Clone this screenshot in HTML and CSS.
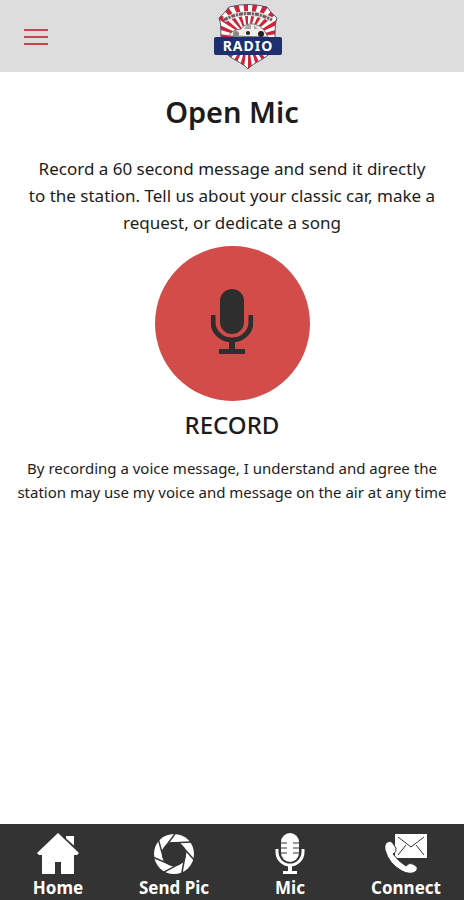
FILE: index.html
```
<!DOCTYPE html>
<html lang="en">
  <head>
    <meta charset="UTF-8" />
    <meta name="viewport" content="width=device-width, initial-scale=1.0" />
    <title>Open Mic</title>
    <link rel="stylesheet" href="styles.css">
  </head>
  <body>

    <header>
      <button class="menu" aria-label="Menu"><span></span><span></span><span></span></button>
      <a class="logo" href="#" aria-label="Radio home">
        <svg width="68" height="66" viewBox="0 0 68 66">
          <defs>
            <path id="outline" d="M5 14 Q11 9 15 3 Q34 -2 53 3 Q57 9 63 14 C59 24 64 34 57 48 C52 55 40 58 34 65 C28 58 16 55 11 48 C4 34 9 24 5 14Z"/>
            <clipPath id="shield"><use href="#outline"/></clipPath>
          </defs>
          <g clip-path="url(#shield)">
            <rect width="68" height="66" fill="#fff"/>
            <circle cx="34" cy="34" r="20" fill="none" stroke="#cf2436" stroke-width="40" pathLength="44" stroke-dasharray="1 1"/>
          </g>
          <use href="#outline" fill="none" stroke="#56546c" stroke-width="1"/>
          <path d="M10 16 Q34 3 58 16" fill="none" stroke="#e8dcdc" stroke-width="5"/>
          <path d="M10 16 Q34 3 58 16" fill="none" stroke="#6b5b60" stroke-width="3" stroke-dasharray="4 1 2 1"/>
          <path d="M15 32 Q17 26 27 25 Q31 19 40 20 Q46 21 50 26 L54 33Z" fill="#efecea" stroke="#777" stroke-width="1"/>
          <path d="M30 25 L33 21 H37 V25Z M40 25 V21 L44 25Z" fill="#aaa"/>
          <circle cx="22" cy="30" r="3" fill="#888"/><circle cx="34" cy="29" r="2" fill="#222"/><circle cx="47" cy="30" r="3" fill="#222"/>
          <rect x="0" y="33" width="68" height="18" rx="2" fill="#1d2f6f"/>
          <text x="34" y="47" text-anchor="middle">RADIO</text>
        </svg>
      </a>
    </header>

    <main>
      <h1>Open Mic</h1>
      <p class="intro">Record a 60 second message and send it directly<br>to the station. Tell us about your classic car, make a<br>request, or dedicate a song</p>
      <button class="record">
        <span class="disc">
          <svg width="42" height="66" viewBox="0 0 42 66">
            <rect x="9" y="0" width="24" height="45" rx="12" fill="#2e2e2e"/>
            <path d="M2 26 V33 A19 18 0 0 0 40 33 V26" fill="none" stroke="#2e2e2e" stroke-width="5"/>
            <path d="M18 51 H24 V60 H34 V65 H8 V60 H18Z" fill="#2e2e2e"/>
          </svg>
        </span>
        RECORD
      </button>
      <p class="terms">By recording a voice message, I understand and agree the<br>station may use my voice and message on the air at any time</p>
    </main>

    <nav>
      <a href="#">
        <svg width="42" height="42" viewBox="0 0 42 42">
          <path d="M21 0 L42 20 L40 22 H37 V41 H24 V29 H18 V41 H5 V22 H2 L0 20Z M29 3 H37 V13 L29 6Z"/>
          <path d="M27 4 L39 15" stroke="#333" stroke-width="1"/>
        </svg>
        Home
      </a>
      <a href="#">
        <svg width="42" height="42" viewBox="-21 -21 42 42">
          <defs><path id="slit" d="M-5 -11 L18 -12" stroke="#333" stroke-width="1.500"/></defs>
          <circle r="20"/>
          <circle r="12" fill="#333"/>
          <use href="#slit"/>
          <use href="#slit" transform="rotate(51)"/>
          <use href="#slit" transform="rotate(103)"/>
          <use href="#slit" transform="rotate(154)"/>
          <use href="#slit" transform="rotate(206)"/>
          <use href="#slit" transform="rotate(257)"/>
          <use href="#slit" transform="rotate(309)"/>
        </svg>
        Send Pic
      </a>
      <a href="#">
        <svg width="42" height="42" viewBox="0 0 42 42">
          <rect x="12" y="0" width="18" height="29" rx="9"/>
          <path d="M12 10 H18 M24 10 H30 M12 15 H18 M24 15 H30 M12 20 H18 M24 20 H30" stroke="#333" stroke-width="1"/>
          <path d="M8 16 V19 A13 13 0 0 0 34 19 V16" fill="none" stroke="#fff" stroke-width="3"/>
          <path d="M19 32 H23 V38 H28 V41 H14 V38 H19Z"/>
        </svg>
        Mic
      </a>
      <a href="#">
        <svg width="42" height="42" viewBox="0 0 42 42">
          <path d="M10 1 H42 V25 H10Z"/>
          <path d="M13 4 L26 14 L39 4 M13 22 L21 12 M39 22 L31 12" fill="none" stroke="#333" stroke-width="1"/>
          <path d="M1 10 Q4 7 7 9 L11 15 Q12 19 8 21 Q13 28 21 33 Q24 29 28 31 L31 33 Q34 36 30 39 Q25 42 17 38 Q4 31 0 17 Q-1 13 1 10Z" stroke="#333" stroke-width="1"/>
        </svg>
        Connect
      </a>
    </nav>

  </body>
</html>
```
FILE: styles.css
```
* { box-sizing: border-box; font-family: "Noto Sans", sans-serif; }

body {
  margin: 0;
  min-height: 100vh;
  display: flex;
  flex-direction: column;
  background: white;
  color: #1c1c1c;
}

button { border: none; background: none; padding: 0; color: inherit; cursor: pointer; }

header {
  display: grid;
  grid-template-columns: 1fr auto 1fr;
  align-items: center;
  height: 72px;
  padding: 2px 24px 0;
  background: #ddd;
}

.menu { display: flex; flex-direction: column; gap: 5px; width: 24px; }
.menu span { height: 2px; background: #cb4450; }

.logo { display: flex; margin-left: 32px; }
.logo text { font: bold 14px "Noto Sans", sans-serif; letter-spacing: 1px; fill: white; }

main {
  flex: 1;
  display: flex;
  flex-direction: column;
  align-items: center;
  text-align: center;
}

h1 { margin: 20px 0; font-size: 29px; font-weight: 600; line-height: 40px; }

p { margin: 0; white-space: nowrap; }
.intro { margin-top: 3px; font-size: 17px; line-height: 27px; }
.terms { margin-top: 15px; font-size: 15px; line-height: 24px; }

.record {
  display: flex;
  flex-direction: column;
  align-items: center;
  margin-top: 10px;
  font-size: 24px;
  font-weight: 500;
  line-height: 32px;
}
.disc {
  display: flex;
  align-items: center;
  justify-content: center;
  width: 155px;
  height: 155px;
  padding-bottom: 4px;
  margin-bottom: 8px;
  border-radius: 50%;
  background: #d24c49;
}

nav {
  display: grid;
  grid-template-columns: repeat(4, 1fr);
  height: 76px;
  padding-top: 9px;
  background: #333;
}
nav a {
  display: flex;
  flex-direction: column;
  align-items: center;
  gap: 1px;
  color: white;
  font-size: 17px;
  font-weight: bold;
  line-height: 24px;
  text-decoration: none;
}
nav svg { fill: white; }
```
